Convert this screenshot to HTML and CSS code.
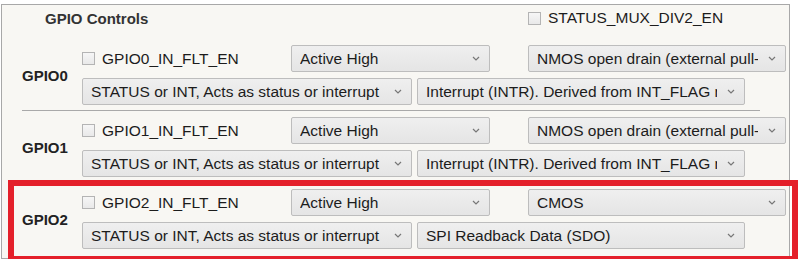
FILE: index.html
```html
<!DOCTYPE html>
<html lang="en">
<head>
  <meta charset="UTF-8">
  <meta name="viewport" content="width=device-width, initial-scale=1.0">
  <title>GPIO Controls</title>
  <link rel="stylesheet" href="styles.css">
</head>
<body>

  <div class="panel">
    <div class="panel-head">
      <h1 class="panel-title">GPIO Controls</h1>
      <label class="check-field head-check"><span class="check"></span>STATUS_MUX_DIV2_EN</label>
    </div>

    <!-- GPIO0 -->
    <div class="group">
      <div class="group-label">GPIO0</div>
      <div class="row row-top">
        <label class="check-field"><span class="check"></span>GPIO0_IN_FLT_EN</label>
        <div class="select select-pol"><span class="value">Active High</span><svg class="chev" width="8" height="5" viewBox="0 0 8 5"><path d="M1 1 L4 4 L7 1" fill="none" stroke="#777" stroke-width="1.2"/></svg></div>
        <div class="select select-drive"><span class="value">NMOS open drain (external pull-up)</span><svg class="chev" width="8" height="5" viewBox="0 0 8 5"><path d="M1 1 L4 4 L7 1" fill="none" stroke="#777" stroke-width="1.2"/></svg></div>
      </div>
      <div class="row row-bottom">
        <div class="select select-src"><span class="value">STATUS or INT, Acts as status or interrupt</span><svg class="chev" width="8" height="5" viewBox="0 0 8 5"><path d="M1 1 L4 4 L7 1" fill="none" stroke="#777" stroke-width="1.2"/></svg></div>
        <div class="select select-fn"><span class="value">Interrupt (INTR). Derived from INT_FLAG register</span><svg class="chev" width="8" height="5" viewBox="0 0 8 5"><path d="M1 1 L4 4 L7 1" fill="none" stroke="#777" stroke-width="1.2"/></svg></div>
      </div>
    </div>
    <div class="sep"></div>

    <!-- GPIO1 -->
    <div class="group">
      <div class="group-label">GPIO1</div>
      <div class="row row-top">
        <label class="check-field"><span class="check"></span>GPIO1_IN_FLT_EN</label>
        <div class="select select-pol"><span class="value">Active High</span><svg class="chev" width="8" height="5" viewBox="0 0 8 5"><path d="M1 1 L4 4 L7 1" fill="none" stroke="#777" stroke-width="1.2"/></svg></div>
        <div class="select select-drive"><span class="value">NMOS open drain (external pull-up)</span><svg class="chev" width="8" height="5" viewBox="0 0 8 5"><path d="M1 1 L4 4 L7 1" fill="none" stroke="#777" stroke-width="1.2"/></svg></div>
      </div>
      <div class="row row-bottom">
        <div class="select select-src"><span class="value">STATUS or INT, Acts as status or interrupt</span><svg class="chev" width="8" height="5" viewBox="0 0 8 5"><path d="M1 1 L4 4 L7 1" fill="none" stroke="#777" stroke-width="1.2"/></svg></div>
        <div class="select select-fn"><span class="value">Interrupt (INTR). Derived from INT_FLAG register</span><svg class="chev" width="8" height="5" viewBox="0 0 8 5"><path d="M1 1 L4 4 L7 1" fill="none" stroke="#777" stroke-width="1.2"/></svg></div>
      </div>
    </div>
    <div class="sep"></div>

    <!-- GPIO2 -->
    <div class="group">
      <div class="group-label">GPIO2</div>
      <div class="row row-top">
        <label class="check-field"><span class="check"></span>GPIO2_IN_FLT_EN</label>
        <div class="select select-pol"><span class="value">Active High</span><svg class="chev" width="8" height="5" viewBox="0 0 8 5"><path d="M1 1 L4 4 L7 1" fill="none" stroke="#777" stroke-width="1.2"/></svg></div>
        <div class="select select-drive"><span class="value">CMOS</span><svg class="chev" width="8" height="5" viewBox="0 0 8 5"><path d="M1 1 L4 4 L7 1" fill="none" stroke="#777" stroke-width="1.2"/></svg></div>
      </div>
      <div class="row row-bottom">
        <div class="select select-src"><span class="value">STATUS or INT, Acts as status or interrupt</span><svg class="chev" width="8" height="5" viewBox="0 0 8 5"><path d="M1 1 L4 4 L7 1" fill="none" stroke="#777" stroke-width="1.2"/></svg></div>
        <div class="select select-fn"><span class="value">SPI Readback Data (SDO)</span><svg class="chev" width="8" height="5" viewBox="0 0 8 5"><path d="M1 1 L4 4 L7 1" fill="none" stroke="#777" stroke-width="1.2"/></svg></div>
      </div>
    </div>

    <div class="highlight"></div>
  </div>

</body>
</html>
```

FILE: styles.css
```css
body {
  margin: 0;
  background: #fff;
  font-family: "Liberation Sans", Arial, sans-serif;
  font-size: 15.5px;
  color: #1c1c1c;
}
.panel {
  position: relative;
  width: 789px;
  margin: 4px 0 0 1px;
  padding-bottom: 4px;
  box-sizing: border-box;
  border: 1px solid #a8a8a8;
  background: #f8f7f3;
}
.panel-head {
  display: flex;
  align-items: center;
  height: 26px;
  margin-bottom: 8px;
}
.panel-title {
  margin: 0 0 0 43px;
  width: 483px;
  font-size: 15px;
  font-weight: bold;
  color: #333;
}
.check-field {
  display: flex;
  align-items: center;
  white-space: nowrap;
}
.check {
  width: 13px;
  height: 13px;
  margin-right: 7px;
  box-sizing: border-box;
  border: 1px solid #b4b4b4;
  background: linear-gradient(#f6f6f6, #e9e9e9);
}
.group {
  display: grid;
  grid-template-columns: 80px 1fr;
  grid-template-rows: 27px 27px;
  row-gap: 6px;
  padding: 6px 0 5px;
}
.group-label {
  grid-row: 1 / 3;
  align-self: center;
  padding-left: 20px;
  font-size: 15px;
  font-weight: bold;
  color: #222;
}
.row {
  display: flex;
  align-items: center;
}
.row-top .check-field {
  width: 209px;
}
.select {
  display: flex;
  align-items: center;
  height: 27px;
  padding: 0 9px 0 8px;
  box-sizing: border-box;
  border: 1px solid #bdbdbd;
  border-radius: 2px;
  background: linear-gradient(#efefef, #e5e5e5);
}
.select .value {
  flex: 1;
  overflow: hidden;
  white-space: nowrap;
  margin-right: 10px;
}
.chev {
  flex: none;
}
.select-pol {
  width: 199px;
}
.select-drive {
  width: 258px;
  margin-left: 38px;
}
.select-src {
  width: 330px;
}
.select-fn {
  width: 328px;
  margin-left: 5px;
}
.sep {
  height: 1px;
  margin: 0 29px 0 20px;
  background: #a9a9a9;
}
.highlight {
  position: absolute;
  top: 175px;
  left: 6px;
  width: 790px;
  height: 82px;
  box-sizing: border-box;
  border: 6px solid #e4202a;
  pointer-events: none;
}
```
